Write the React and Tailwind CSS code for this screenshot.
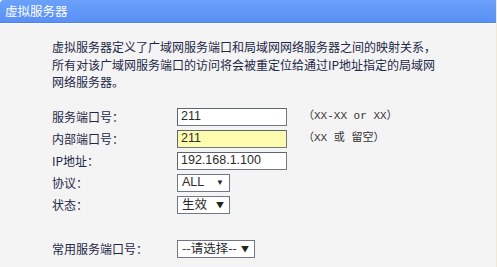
const cjk = { fontFamily: '"Noto Sans CJK SC", "Liberation Sans", sans-serif' };
const num = { fontFamily: '"Liberation Sans", Arial, sans-serif' };
const hint = { fontFamily: '"Liberation Mono", "Noto Sans CJK SC", monospace' };

const Row = ({ label, children }) => (
  <div className="flex items-center h-[22px]">
    <div className="w-[125px] text-[12px] text-[#1d2847]" style={cjk}>
      {label}
    </div>
    {children}
  </div>
);

const TextBox = ({ value, yellow }) => (
  <div
    className={`w-[110px] h-[18px] border border-[#6f7884] border-t-[#5d6570] border-l-[#5d6570] flex items-center pl-[3px] text-[12.5px] text-[#2a2a2a] ${
      yellow ? "bg-[#fdfbae]" : "bg-white"
    }`}
    style={num}
  >
    {value}
  </div>
);

const Pick = ({ value, width, font }) => (
  <div
    className={`${width} h-[18px] border border-[#6f7884] bg-white flex items-center justify-between pl-[4px] pr-[5px] text-[12.5px] text-[#2a2a2a]`}
    style={font}
  >
    <span>{value}</span>
    <span className="text-[8px] text-[#222]">▼</span>
  </div>
);

export default function App() {
  return (
    <div className="w-[497px] h-[267px] bg-[#f4f4f4] overflow-hidden flex flex-col border-r border-[#f1e6cf]">
      <div className="h-[23px] shrink-0 bg-gradient-to-b from-[#6ba1fa] to-[#5a90f4] border-b border-[#4d83e6] rounded-tl-[4px] flex items-center pl-[5px]">
        <span className="text-white text-[12.5px]" style={cjk}>
          虚拟服务器
        </span>
      </div>
      <div className="h-px bg-[#fbfbfb]" />

      <div className="pl-[52px] pt-[14px]">
        <p className="text-[12px] leading-[17.5px] text-[#1d2847]" style={cjk}>
          虚拟服务器定义了广域网服务端口和局域网网络服务器之间的映射关系，
          <br />
          所有对该广域网服务端口的访问将会被重定位给通过IP地址指定的局域网
          <br />
          网络服务器。
        </p>

        <div className="mt-[15px] flex flex-col">
          <Row label="服务端口号：">
            <TextBox value="211" />
            <span className="ml-[16px] text-[11px] text-[#333]" style={hint}>
              （XX-XX or XX）
            </span>
          </Row>
          <Row label="内部端口号：">
            <TextBox value="211" yellow />
            <span className="ml-[16px] text-[11px] text-[#333]" style={hint}>
              （XX 或 留空）
            </span>
          </Row>
          <Row label="IP地址：">
            <TextBox value="192.168.1.100" />
          </Row>
          <Row label="协议：">
            <Pick value="ALL" width="w-[53px]" font={num} />
          </Row>
          <Row label="状态：">
            <Pick value="生效" width="w-[53px]" font={cjk} />
          </Row>
          <div className="h-[22px]" />
          <Row label="常用服务端口号：">
            <Pick value="--请选择--" width="w-[78px]" font={cjk} />
          </Row>
        </div>
      </div>
    </div>
  );
}
